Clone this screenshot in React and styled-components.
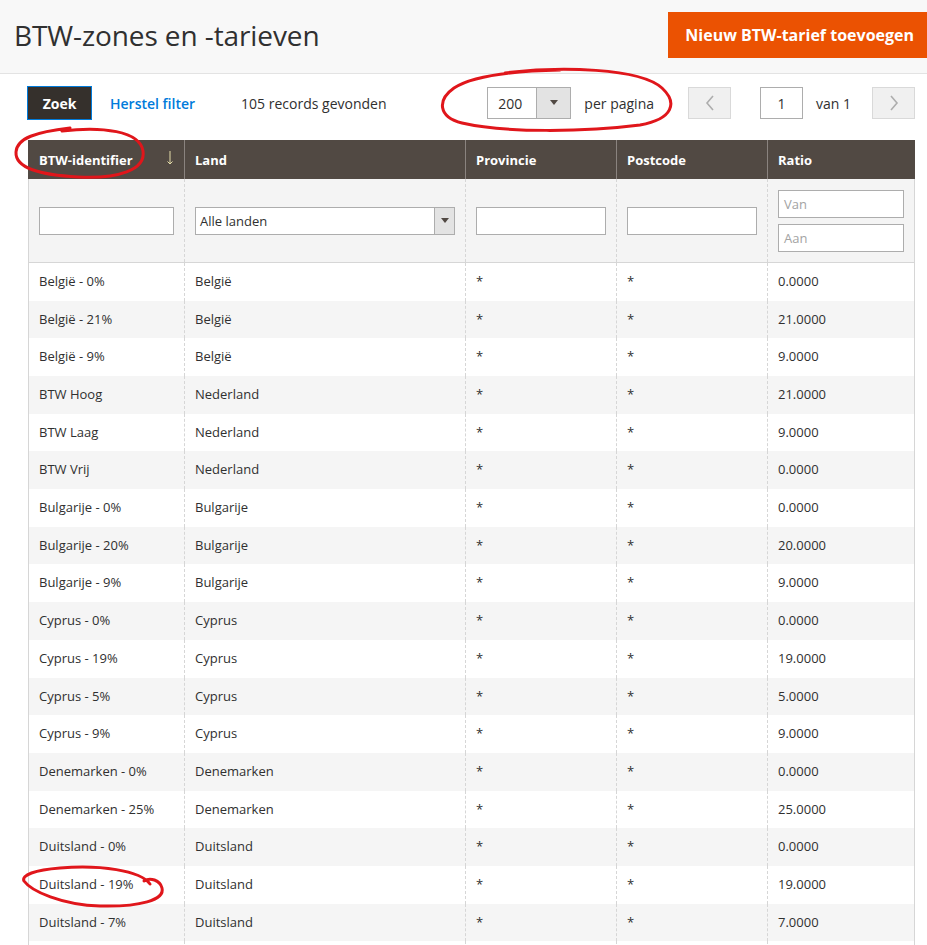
import styled, { createGlobalStyle } from 'styled-components'

const GlobalStyle = createGlobalStyle`
	body {
		margin: 0;
		font-family: 'Open Sans', 'Noto Sans', sans-serif;
		color: #303030;
		background: #fff;
	}
`

const rows = [
	['België - 0%', 'België', '0.0000'],
	['België - 21%', 'België', '21.0000'],
	['België - 9%', 'België', '9.0000'],
	['BTW Hoog', 'Nederland', '21.0000'],
	['BTW Laag', 'Nederland', '9.0000'],
	['BTW Vrij', 'Nederland', '0.0000'],
	['Bulgarije - 0%', 'Bulgarije', '0.0000'],
	['Bulgarije - 20%', 'Bulgarije', '20.0000'],
	['Bulgarije - 9%', 'Bulgarije', '9.0000'],
	['Cyprus - 0%', 'Cyprus', '0.0000'],
	['Cyprus - 19%', 'Cyprus', '19.0000'],
	['Cyprus - 5%', 'Cyprus', '5.0000'],
	['Cyprus - 9%', 'Cyprus', '9.0000'],
	['Denemarken - 0%', 'Denemarken', '0.0000'],
	['Denemarken - 25%', 'Denemarken', '25.0000'],
	['Duitsland - 0%', 'Duitsland', '0.0000'],
	['Duitsland - 19%', 'Duitsland', '19.0000'],
	['Duitsland - 7%', 'Duitsland', '7.0000'],
]

const Chevron = ({ dir }) => (
	<svg width="10" height="16" viewBox="0 0 10 16">
		<path
			d={dir === 'left' ? 'M8 1 L2 8 L8 15' : 'M2 1 L8 8 L2 15'}
			fill="none"
			stroke="#adadad"
			strokeWidth="1.6"
		/>
	</svg>
)

const Caret = () => (
	<svg width="10" height="6" viewBox="0 0 10 6">
		<path d="M1 0 L9 0 L5 5 Z" fill="#514943" />
	</svg>
)

const App = () => {
	return (
		<Page>
			<GlobalStyle />
			<Header>
				<Title>BTW-zones en -tarieven</Title>
				<AddButton>Nieuw BTW-tarief toevoegen</AddButton>
			</Header>
			<Content>
				<Toolbar>
					<SearchButton>Zoek</SearchButton>
					<ResetLink>Herstel filter</ResetLink>
					<Count>105 records gevonden</Count>
					<Spacer />
					<LimitSelect>
						<LimitValue>200</LimitValue>
						<LimitArrow>
							<Caret />
						</LimitArrow>
					</LimitSelect>
					<ToolbarLabel>per pagina</ToolbarLabel>
					<PagerButton>
						<Chevron dir="left" />
					</PagerButton>
					<PageInput>1</PageInput>
					<ToolbarLabel>van 1</ToolbarLabel>
					<PagerButton $last>
						<Chevron dir="right" />
					</PagerButton>
				</Toolbar>
				<Grid>
					<colgroup>
						<col style={{ width: 156 }} />
						<col style={{ width: 281 }} />
						<col style={{ width: 151 }} />
						<col style={{ width: 151 }} />
						<col />
					</colgroup>
					<thead>
						<tr>
							<Th>
								BTW-identifier
								<SortArrow width="6" height="14" viewBox="0 0 6 14">
									<path d="M3 0 L3 13 M0.5 10.5 L3 13 L5.5 10.5" />
								</SortArrow>
							</Th>
							<Th>Land</Th>
							<Th>Provincie</Th>
							<Th>Postcode</Th>
							<Th>Ratio</Th>
						</tr>
						<FilterRow>
							<FilterCell>
								<FilterInput />
							</FilterCell>
							<FilterCell>
								<FilterSelect>
									<span>Alle landen</span>
									<SelectArrow>
										<Caret />
									</SelectArrow>
								</FilterSelect>
							</FilterCell>
							<FilterCell>
								<FilterInput />
							</FilterCell>
							<FilterCell>
								<FilterInput />
							</FilterCell>
							<FilterCell>
								<RangeStack>
									<FilterInput $placeholder>Van</FilterInput>
									<FilterInput $placeholder>Aan</FilterInput>
								</RangeStack>
							</FilterCell>
						</FilterRow>
					</thead>
					<tbody>
						{rows.map(([id, land, ratio], index) => (
							<Row key={id} $odd={index % 2 === 1}>
								<Td>{id}</Td>
								<Td>{land}</Td>
								<Td>*</Td>
								<Td>*</Td>
								<Td>{ratio}</Td>
							</Row>
						))}
						<Row>
							<Td />
							<Td />
							<Td />
							<Td />
							<Td />
						</Row>
					</tbody>
				</Grid>
			</Content>
			<Marks viewBox="0 0 927 945">
				<path d="M505 73 C560 66 640 68 662 88 C678 103 673 119 640 125 C585 132 505 133 462 123 C438 117 437 100 454 88 C472 76 510 71 560 70" />
				<path d="M62 131 C102 126 140 131 143 151 C146 170 118 179 78 177 C40 175 15 168 16 152 C17 138 36 132 70 128" />
				<path d="M150 884 C140 870 100 865 60 868 C35 870 21 875 24 881 C31 891 62 905 100 906 C140 907 165 900 162 888 C160 880 150 877 144 881" />
			</Marks>
		</Page>
	)
}

export default App

const Page = styled.div`
	position: relative;
	width: 927px;
	height: 945px;
	overflow: hidden;
`

const Header = styled.div`
	display: flex;
	align-items: center;
	justify-content: space-between;
	height: 73px;
	padding-left: 14px;
	background: #f8f8f8;
	border-bottom: 1px solid #e3e3e3;
`

const Title = styled.h1`
	margin: 0 0 3px 0;
	font-size: 28px;
	font-weight: 400;
	color: #303030;
	letter-spacing: -0.1px;
`

const AddButton = styled.div`
	display: flex;
	align-items: center;
	height: 46px;
	padding: 0 13px 0 17px;
	margin-top: -3px;
	background: #eb5202;
	color: #fff;
	font-size: 16px;
	font-weight: 700;
	white-space: nowrap;
`

const Content = styled.div`
	padding: 12px 12px 0 28px;
`

const Toolbar = styled.div`
	display: flex;
	align-items: center;
	height: 34px;
	margin-bottom: 20px;
`

const SearchButton = styled.div`
	display: flex;
	align-items: center;
	justify-content: center;
	width: 63px;
	height: 32px;
	margin-left: -1px;
	background: #35302c;
	border: 1px solid #007bdb;
	color: #fff;
	font-size: 14px;
	font-weight: 700;
`

const ResetLink = styled.span`
	margin-left: 18px;
	color: #007bdb;
	font-size: 14px;
	font-weight: 600;
`

const Count = styled.span`
	margin-left: 46px;
	font-size: 14px;
`

const Spacer = styled.div`
	flex: 1;
`

const LimitSelect = styled.div`
	display: flex;
	width: 82px;
	height: 30px;
	border: 1px solid #adadad;
	background: #fff;
`

const LimitValue = styled.div`
	flex: 1;
	display: flex;
	align-items: center;
	padding-left: 10px;
	font-size: 14px;
`

const LimitArrow = styled.div`
	display: flex;
	align-items: center;
	justify-content: center;
	width: 33px;
	background: #e3e3e3;
	border-left: 1px solid #adadad;
`

const ToolbarLabel = styled.span`
	margin: 0 34px 0 13px;
	font-size: 14px;
	white-space: nowrap;

	&:last-of-type {
		margin-right: 21px;
	}
`

const PagerButton = styled.div`
	display: flex;
	align-items: center;
	justify-content: center;
	width: 41px;
	height: 30px;
	margin-right: ${(p) => (p.$last ? '0' : '29px')};
	background: #f0f0f0;
	border: 1px solid #d9d9d9;
`

const PageInput = styled.div`
	display: flex;
	align-items: center;
	justify-content: center;
	width: 41px;
	height: 30px;
	border: 1px solid #adadad;
	font-size: 14px;
`

const Grid = styled.table`
	width: 887px;
	border-collapse: collapse;
	table-layout: fixed;
	border-left: 1px solid #d6d6d6;
	border-right: 1px solid #d6d6d6;
	font-size: 13px;
`

const Th = styled.th`
	position: relative;
	height: 39px;
	padding: 0 10px;
	box-sizing: border-box;
	background: #514943;
	color: #fff;
	font-weight: 700;
	text-align: left;
	border-left: 1px solid #8a837f;
	border-right: 1px solid #8a837f;

	&:first-child {
		border-left-color: #514943;
	}
	&:last-child {
		border-right-color: #514943;
	}
`

const SortArrow = styled.svg`
	position: absolute;
	right: 11px;
	top: 11px;

	path {
		fill: none;
		stroke: #e4dca8;
		stroke-width: 1;
	}
`

const FilterRow = styled.tr`
	background: #f4f4f4;
	border-bottom: 1px solid #d6d6d6;
`

const FilterCell = styled.td`
	height: 83px;
	box-sizing: border-box;
	padding: 11px 10px 10px 10px;
	vertical-align: middle;
	border-left: 1px dashed #d6d6d6;

	&:first-child {
		border-left: none;
	}
`

const FilterInput = styled.div`
	height: 26px;
	box-sizing: content-box;
	border: 1px solid #adadad;
	background: #fff;
	padding-left: 5px;
	display: flex;
	align-items: center;
	color: #a3a3a3;
	font-size: 13px;
`

const RangeStack = styled.div`
	display: flex;
	flex-direction: column;
	gap: 6px;
`

const FilterSelect = styled.div`
	display: flex;
	align-items: center;
	justify-content: space-between;
	height: 26px;
	border: 1px solid #adadad;
	background: #fff;
	padding-left: 4px;
	font-size: 13px;

	span {
		color: #303030;
	}
`

const SelectArrow = styled.div`
	display: flex;
	align-items: center;
	justify-content: center;
	width: 19px;
	height: 100%;
	background: #e3e3e3;
	border-left: 1px solid #adadad;
`

const Row = styled.tr`
	background: ${(p) => (p.$odd ? '#f5f5f5' : '#fff')};
`

const Td = styled.td`
	height: 37.7px;
	box-sizing: border-box;
	padding: 10px 10px;
	line-height: 1.36;
	color: #303030;
	border-left: 1px dashed #d6d6d6;
	white-space: nowrap;

	&:first-child {
		border-left: none;
	}
`

const Marks = styled.svg`
	position: absolute;
	left: 0;
	top: 0;
	width: 927px;
	height: 945px;
	pointer-events: none;

	path {
		fill: none;
		stroke: #e0161b;
		stroke-width: 3;
		stroke-linecap: round;
		stroke-linejoin: round;
	}
`
